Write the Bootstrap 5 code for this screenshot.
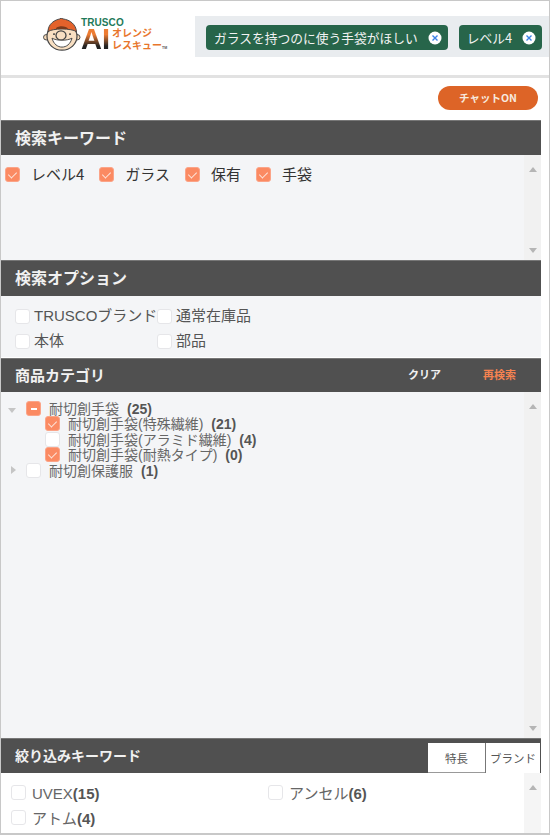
<!DOCTYPE html>
<html lang="ja">
<head>
<meta charset="utf-8">
<title>TRUSCO</title>
<link rel="stylesheet" href="https://cdn.jsdelivr.net/npm/bootstrap@5.3.0/dist/css/bootstrap.min.css">
<style>
html,body{margin:0;height:835px;overflow:hidden;background:#fff}
body{font-family:"Liberation Sans","Noto Sans CJK JP",sans-serif;color:#555;font-size:14px}
.shell{width:550px;height:835px;border:1px solid #c8c8c8;border-bottom:2px solid #c8c8c8;overflow:hidden;display:flex;flex-direction:column}
.topbar{height:77px;border-bottom:3px solid #e2e2e2;flex:none;padding-top:15px}
.logo-area{width:194px;flex:none;padding-left:42px}
.mascot{flex:none;margin-top:2px}
.logo-txt{width:90px;height:36px}
.trusco{font:700 10px/9px "Liberation Sans",sans-serif;color:#1f7a5a;letter-spacing:.1px;margin-top:2px}
.logo-row{gap:2px;margin-top:1px}
.ai{font:700 29px/23px "Liberation Sans",sans-serif;background:linear-gradient(#ee7c32 0,#ee7c32 25%,#222 70%);-webkit-background-clip:text;background-clip:text;color:transparent}
.ai-sub{font:700 10px/12px "Liberation Sans","Noto Sans CJK JP",sans-serif;color:#e8762c;white-space:nowrap}
.tm{font-size:3.5px;color:#555}
.tag-strip{flex:1;background:#e9ecef;height:41px;padding:9px 0 0 11px;gap:11px;overflow:hidden}
.tag-pill{background:#27654a;color:#f2f2f2;height:25px;border-radius:4px;padding:0 6px 0 8px;font:12.75px/25px "Noto Sans CJK JP",sans-serif;white-space:nowrap;gap:10px;flex:none}
.tag-x{width:14px;height:14px;flex:none;display:block}
.chat-row{height:42px;flex:none;padding:8px 11px 0 0}
.chat-btn{background:#dd6427;color:#f7e9df;border:0;border-radius:13px;width:100px;height:24px;font:700 10.5px/24px "Noto Sans CJK JP",sans-serif;padding:0}
.panel-wrap{width:540px;flex:1;display:flex;flex-direction:column;min-height:0}
.sec-head{background:#505050;color:#f1f1f1;font:700 16px "Noto Sans CJK JP",sans-serif;padding:0 0 3px 14px;flex:none;border-top:1px solid #777}
.h36{height:36px}
.h35{height:35px}
.h34{height:34px;font-size:15px}
.filter-head{font-size:14px}
.sec-body{background:#f4f5f7;position:relative;flex:none}
.fake-scroll{position:absolute;top:0;right:0;bottom:0;width:17px;background:#f1f1f1}
.arr-up,.arr-down{position:absolute;left:5px;width:0;height:0;border-left:4px solid transparent;border-right:4px solid transparent}
.arr-up{top:12px;border-bottom:5px solid #b5b5b5}
.arr-down{bottom:7px;border-top:5px solid #b5b5b5}
.cb{width:15px;height:15px;border-radius:3px;background:#fff;border:1px solid #e6e6e9;flex:none;display:block;position:relative}
.cb-on{background:#fb8a62;border-color:#fba488}
.cb-on::after{content:"";position:absolute;left:4px;top:2px;width:5px;height:8px;border:solid #fde6dc;border-width:0 1.3px 1.3px 0;transform:rotate(45deg)}
.cb-dash{background:#fb8a62;border-color:#fba488}
.cb-dash::after{content:"";position:absolute;left:4px;top:6px;width:6px;height:2px;background:#fff}
.kw-body{height:105px;padding:11px 0 0 4px;gap:15px;color:#333;font:15px/16px "Noto Sans CJK JP",sans-serif}
.kw-item{gap:11px}
.kw-item .cb{margin-top:1px}
.opt-body{height:61px;padding:10px 0 0 14px;font:15px/20px "Liberation Sans","Noto Sans CJK JP",sans-serif;color:#555}
.opt-row{height:25px}
.opt-cell{width:142px;gap:4px;white-space:nowrap}
.opt-cell2{gap:4px}
.opt-row .cb{margin-top:3px}
.gap-line{height:1px;background:#fff;flex:none}
.cat-actions{font:700 11px "Noto Sans CJK JP",sans-serif;gap:42px;padding-right:25px}
.act-re{color:#f58350}
.cat-body{flex:none;height:346px;padding-top:10px;font:14px/15px "Liberation Sans","Noto Sans CJK JP",sans-serif;color:#666}
.tree-row{height:15.4px;white-space:nowrap;gap:8px}
.tree-row .cb{margin-top:-1px}
.lvl0{padding-left:25px}
.lvl1{padding-left:44px;gap:8px}
.tri-d,.tri-r{position:absolute;width:0;height:0}
.tri-d{left:7px;top:16px;border-left:4px solid transparent;border-right:4px solid transparent;border-top:5px solid #c5c5c5}
.tri-r{left:10px;top:74px;border-top:4px solid transparent;border-bottom:4px solid transparent;border-left:5px solid #c5c5c5}
.cnt{font-weight:700;color:#555;margin-left:8px}
.filter-head{position:relative;align-items:center}
.tab-pair{position:absolute;right:1px;bottom:0;display:flex;height:30px}
.tab-a,.tab-b{background:#fff;color:#555;font:11.5px/30px "Noto Sans CJK JP",sans-serif;text-align:center}
.tab-a{width:57px;border-bottom:1px solid #999}
.tab-b{width:55px;border-left:1px solid #777;height:31px;white-space:nowrap;overflow:hidden}
.filter-body{background:#fff;flex:1;min-height:0;padding:12px 0 0 10px;font:15px/18px "Liberation Sans","Noto Sans CJK JP",sans-serif;color:#666}
.filter-body .fake-scroll{background:#f5f5f5}
.f-row{height:25px}
.f-cell{width:257px;gap:6px}
.f-cell b{color:#555;font-weight:700}
</style>
</head>
<body>
<div class="shell">
  <div class="topbar d-flex">
    <div class="logo-area d-flex">
      <svg class="mascot" width="38" height="33" viewBox="0 0 38 36" preserveAspectRatio="none" aria-hidden="true">
        <circle cx="3.5" cy="21" r="3" fill="#f6d9b8" stroke="#444" stroke-width="1"/>
        <circle cx="34" cy="21" r="3" fill="#f6d9b8" stroke="#444" stroke-width="1"/>
        <circle cx="19" cy="20" r="15" fill="#f8dfc2" stroke="#444" stroke-width="1.2"/>
        <path d="M5 15C5 6 12 2 17 1l1-1 2 1C27 2 33 7 33.500 15 29 11 9 11 5 15Z" fill="#e4622b" stroke="#444" stroke-width="1"/>
        <path d="M13 12c0-4 11-4 12 0z" fill="#7a3a1c"/>
        <circle cx="18" cy="19" r="5" fill="none" stroke="#444" stroke-width="1.300"/>
        <path d="M9 22c3 13 17 13 20 0-5 3-15 3-20 0Z" fill="#fff" stroke="#444" stroke-width="1"/>
        <circle cx="11" cy="17.500" r="1" fill="#333"/><circle cx="27" cy="17.500" r="1" fill="#333"/>
      </svg>
      <div class="logo-txt">
        <div class="trusco">TRUSCO</div>
        <div class="logo-row d-flex">
          <span class="ai">AI</span>
          <span class="ai-sub">オレンジ<br>レスキュー<span class="tm">TM</span></span>
        </div>
      </div>
    </div>
    <div class="tag-strip d-flex">
      <div class="tag-pill d-flex align-items-center">ガラスを持つのに使う手袋がほしい
        <svg class="tag-x" viewBox="0 0 14 14"><circle cx="7" cy="7" r="6.500" fill="#fff"/><path d="M4.500 4.500l5 5M9.500 4.500l-5 5" stroke="#3b82e6" stroke-width="1.400"/></svg>
      </div>
      <div class="tag-pill d-flex align-items-center">レベル4
        <svg class="tag-x" viewBox="0 0 14 14"><circle cx="7" cy="7" r="6.500" fill="#fff"/><path d="M4.500 4.500l5 5M9.500 4.500l-5 5" stroke="#3b82e6" stroke-width="1.400"/></svg>
      </div>
    </div>
  </div>
  <div class="chat-row d-flex justify-content-end"><button class="chat-btn" type="button">チャットON</button></div>
  <div class="panel-wrap">
    <div class="sec-head h35 d-flex align-items-center">検索キーワード</div>
    <div class="sec-body kw-body d-flex align-items-start">
      <div class="kw-item d-flex"><span class="cb cb-on"></span>レベル4</div>
      <div class="kw-item d-flex"><span class="cb cb-on"></span>ガラス</div>
      <div class="kw-item d-flex"><span class="cb cb-on"></span>保有</div>
      <div class="kw-item d-flex"><span class="cb cb-on"></span>手袋</div>
      <div class="fake-scroll"><i class="arr-up"></i><i class="arr-down"></i></div>
    </div>
    <div class="sec-head h36 d-flex align-items-center">検索オプション</div>
    <div class="sec-body opt-body">
      <div class="opt-row d-flex"><div class="opt-cell d-flex"><span class="cb"></span>TRUSCOブランド</div><div class="opt-cell2 d-flex"><span class="cb"></span>通常在庫品</div></div>
      <div class="opt-row d-flex"><div class="opt-cell d-flex"><span class="cb"></span>本体</div><div class="opt-cell2 d-flex"><span class="cb"></span>部品</div></div>
    </div>
    <div class="gap-line"></div>
    <div class="sec-head h34 d-flex align-items-center justify-content-between">
      <span>商品カテゴリ</span>
      <div class="cat-actions d-flex"><span>クリア</span><span class="act-re">再検索</span></div>
    </div>
    <div class="sec-body cat-body">
      <i class="tri-d"></i><i class="tri-r"></i>
      <div class="tree-row lvl0 d-flex"><span class="cb cb-dash"></span><span>耐切創手袋<span class="cnt ms-2">(25)</span></span></div>
      <div class="tree-row lvl1 d-flex"><span class="cb cb-on"></span><span>耐切創手袋(特殊繊維)<span class="cnt">(21)</span></span></div>
      <div class="tree-row lvl1 d-flex"><span class="cb"></span><span>耐切創手袋(アラミド繊維)<span class="cnt">(4)</span></span></div>
      <div class="tree-row lvl1 d-flex"><span class="cb cb-on"></span><span>耐切創手袋(耐熱タイプ)<span class="cnt">(0)</span></span></div>
      <div class="tree-row lvl0 d-flex"><span class="cb"></span><span>耐切創保護服<span class="cnt">(1)</span></span></div>
      <div class="fake-scroll"><i class="arr-up"></i><i class="arr-down"></i></div>
    </div>
    <div class="sec-head h35 filter-head d-flex">絞り込みキーワード
      <div class="tab-pair"><div class="tab-a">特長</div><div class="tab-b">ブランド</div></div>
    </div>
    <div class="sec-body filter-body">
      <div class="f-row d-flex"><div class="f-cell d-flex"><span class="cb"></span><span>UVEX<b>(15)</b></span></div><div class="f-cell d-flex"><span class="cb"></span><span>アンセル<b>(6)</b></span></div></div>
      <div class="f-row d-flex"><div class="f-cell d-flex"><span class="cb"></span><span>アトム<b>(4)</b></span></div></div>
      <div class="fake-scroll"><i class="arr-up"></i></div>
    </div>
  </div>
</div>
<script src="https://cdn.jsdelivr.net/npm/bootstrap@5.3.0/dist/js/bootstrap.bundle.min.js"></script>
</body>
</html>
